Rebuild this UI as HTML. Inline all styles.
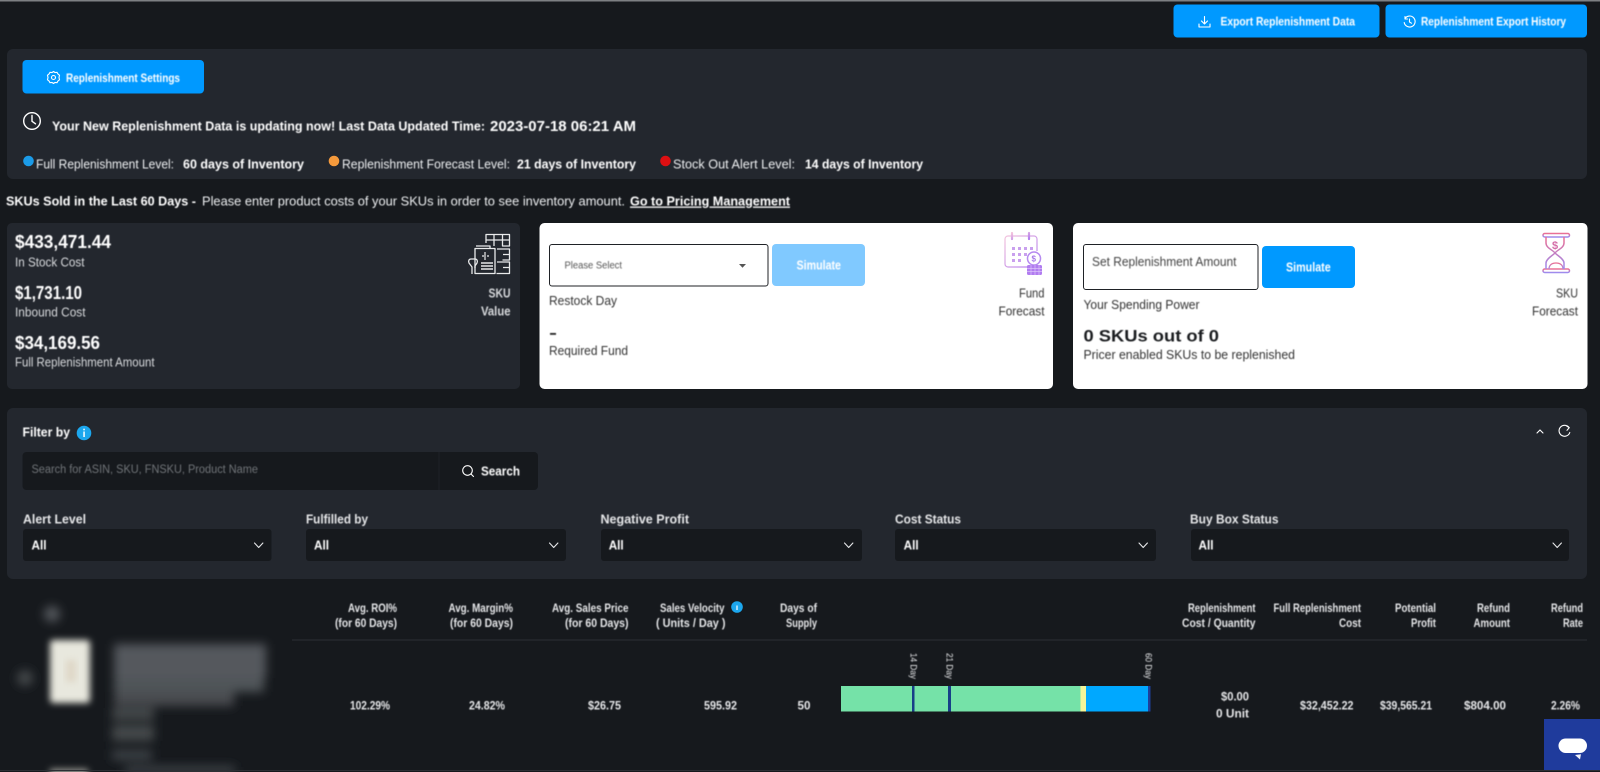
<!DOCTYPE html>
<html lang="en">
<head>
<meta charset="utf-8">
<title>Replenishment</title>
<style>
html,body{margin:0;padding:0;background:#16191d;width:1600px;height:772px;overflow:hidden}
svg{display:block}
text{font-family:"Liberation Sans",sans-serif;fill:#fff}
.r{font-weight:400}
.b{font-weight:700}
.w{fill:#eef0f2}
.soft{filter:blur(.45px)}
</style>
</head>
<body>
<svg width="1600" height="772" viewBox="0 0 1600 772" xmlns="http://www.w3.org/2000/svg">
<defs>
<filter id="bl" x="-30%" y="-30%" width="160%" height="160%"><feGaussianBlur stdDeviation="5"/></filter>
<filter id="bl2" x="-30%" y="-30%" width="160%" height="160%"><feGaussianBlur stdDeviation="3.500"/></filter>
<linearGradient id="hg" x1="0" y1="0" x2="0" y2="1"><stop offset="0" stop-color="#ec6f92"/><stop offset="1" stop-color="#9c8cf0"/></linearGradient>
<linearGradient id="cg" x1="0" y1="0" x2="1" y2="1"><stop offset="0" stop-color="#f3c3dd"/><stop offset="1" stop-color="#b17cf0"/></linearGradient>
</defs>
<rect width="1600" height="772" fill="#16191d"/>
<rect width="1600" height="1.500" fill="#7d8083"/>

<!-- top buttons -->
<rect x="1173.500" y="4.500" width="206" height="33" rx="4" fill="#0099ff"/>
<rect x="1385.500" y="4.500" width="201.500" height="33" rx="4" fill="#0099ff"/>
<g fill="none" stroke="#fff" stroke-width="1.100" stroke-linecap="round" stroke-linejoin="round">
<path d="M1204.500 16.500v7M1201.500 21l3 3 3-3M1199 24v3h11v-3"/>
<path d="M1405 18.500a5.500 5.500 0 1 1-.800 4M1405 16.500v2.500h2.500M1409.500 19v3l2 1.200"/>
</g>
<g class="soft">
<text class="b" x="1220.500" y="25.500" font-size="12" textLength="134.500" lengthAdjust="spacingAndGlyphs">Export Replenishment Data</text>
<text class="b" x="1421" y="25.500" font-size="12" textLength="145" lengthAdjust="spacingAndGlyphs">Replenishment Export History</text>
</g>

<!-- info panel -->
<rect x="7" y="49" width="1580" height="130" rx="6" fill="#23272e"/>
<rect x="22.500" y="60" width="181.500" height="33.500" rx="4" fill="#0099ff"/>
<g fill="none" stroke="#fff" stroke-width="1.100">
<circle cx="53.500" cy="77.500" r="2"/>
<path d="M53.500 71.500l1.500 1 2-.2 1 1.700 1.500 1.200-.5 2.300.5 2.300-1.500 1.200-1 1.700-2-.2-1.500 1-1.500-1-2 .2-1-1.700-1.500-1.200.5-2.300-.5-2.300 1.500-1.200 1-1.700 2 .2z"/>
<circle cx="32" cy="121" r="8.300" stroke-width="1.400"/>
<path d="M32 115.500v5.800l3.500 2.500" stroke-width="1.400" stroke-linecap="round"/>
</g>
<g class="soft">
<text class="b" x="66" y="82" font-size="12" textLength="114" lengthAdjust="spacingAndGlyphs">Replenishment Settings</text>
<text class="b" x="52" y="130.500" font-size="13" textLength="433" lengthAdjust="spacingAndGlyphs">Your New Replenishment Data is updating now! Last Data Updated Time:</text>
<text class="b" x="490" y="131" font-size="15" textLength="146" lengthAdjust="spacingAndGlyphs">2023-07-18 06:21 AM</text>
<text class="r w" x="36" y="168.500" font-size="13" textLength="138" lengthAdjust="spacingAndGlyphs">Full Replenishment Level:</text>
<text class="b" x="183" y="168.500" font-size="13" textLength="121" lengthAdjust="spacingAndGlyphs">60 days of Inventory</text>
<text class="r w" x="342" y="168.500" font-size="13" textLength="168" lengthAdjust="spacingAndGlyphs">Replenishment Forecast Level:</text>
<text class="b" x="517" y="168.500" font-size="13" textLength="119" lengthAdjust="spacingAndGlyphs">21 days of Inventory</text>
<text class="r w" x="673" y="168.500" font-size="13" textLength="122" lengthAdjust="spacingAndGlyphs">Stock Out Alert Level:</text>
<text class="b" x="805" y="168.500" font-size="13" textLength="118" lengthAdjust="spacingAndGlyphs">14 days of Inventory</text>
</g>
<circle cx="28.500" cy="161" r="5.300" fill="#1b9be8"/>
<circle cx="334" cy="161" r="5.300" fill="#f59a3c"/>
<circle cx="665.500" cy="161" r="5.300" fill="#dd0f12"/>

<!-- heading -->
<g class="soft">
<text class="b" x="6" y="205.500" font-size="13" textLength="190" lengthAdjust="spacingAndGlyphs">SKUs Sold in the Last 60 Days -</text>
<text class="r w" x="202" y="205.500" font-size="13" textLength="423" lengthAdjust="spacingAndGlyphs">Please enter product costs of your SKUs in order to see inventory amount.</text>
<text class="b" x="630" y="205.500" font-size="13" textLength="160" lengthAdjust="spacingAndGlyphs" text-decoration="underline">Go to Pricing Management</text>
</g>

<!-- card 1 -->
<rect x="7" y="223" width="513" height="166" rx="5" fill="#23272e"/>
<g class="soft">
<text class="b" x="15" y="248" font-size="18" textLength="96" lengthAdjust="spacingAndGlyphs">$433,471.44</text>
<text class="r" x="15" y="266.500" font-size="12.500" style="fill:#d8dadd" textLength="69.500" lengthAdjust="spacingAndGlyphs">In Stock Cost</text>
<text class="b" x="15" y="299" font-size="18" textLength="67" lengthAdjust="spacingAndGlyphs">$1,731.10</text>
<text class="r" x="15" y="316.500" font-size="12.500" style="fill:#d8dadd" textLength="70.500" lengthAdjust="spacingAndGlyphs">Inbound Cost</text>
<text class="b" x="15" y="349" font-size="18" textLength="85" lengthAdjust="spacingAndGlyphs">$34,169.56</text>
<text class="r" x="15" y="366.500" font-size="12.500" style="fill:#d8dadd" textLength="139.500" lengthAdjust="spacingAndGlyphs">Full Replenishment Amount</text>
<text class="b" x="488.500" y="297.500" font-size="12.500" style="fill:#d8dadd" textLength="22" lengthAdjust="spacingAndGlyphs">SKU</text>
<text class="b" x="481" y="315.500" font-size="12.500" style="fill:#d8dadd" textLength="29.500" lengthAdjust="spacingAndGlyphs">Value</text>
</g>
<g fill="none" stroke="#e8e9ea" stroke-width="1.300" stroke-linejoin="round">
<path d="M486 243v-8.500h23.500v11.500h-7v-11.500M494 234.500v11.500M486 240h23.500"/>
<path d="M497 249h12.500v11h-7M503 254.500h6.500M497 262h12.500v11.500h-13M503 267.500h6.500"/>
<path d="M476 246h14v2"/>
<rect x="475" y="248.500" width="20" height="25"/>
<path d="M482 256h2M485 252v8M487 256h2" stroke-width="1.200"/>
<path d="M481 263h12M481 266h12M481 269h12" stroke-width="1.400"/>
<path d="M472 274v-7l-3-4c-1-2 0-4 2-4h4c2 0 3 2 2 4l-2 3v2"/>
</g>

<!-- card 2 -->
<rect x="539.500" y="223" width="513.500" height="166" rx="5" fill="#fff"/>
<rect x="549.500" y="244.500" width="218.500" height="41.500" rx="2.500" fill="#fff" stroke="#1f2226" stroke-width="1"/>
<rect x="772" y="244" width="93" height="42" rx="4" fill="#80c9ff"/>
<path d="M739 264h7l-3.500 3.800z" fill="#555"/>
<g class="soft">
<text class="r" x="564.500" y="268.500" font-size="10" style="fill:#555" textLength="57.500" lengthAdjust="spacingAndGlyphs">Please Select</text>
<text class="b" x="796.500" y="269.500" font-size="13" textLength="44.500" lengthAdjust="spacingAndGlyphs">Simulate</text>
<text class="r" x="549" y="305" font-size="12.500" style="fill:#333" textLength="68" lengthAdjust="spacingAndGlyphs">Restock Day</text>
<rect x="550" y="333" width="6" height="1.800" fill="#222"/>
<text class="r" x="549" y="355" font-size="12.500" style="fill:#333" textLength="79" lengthAdjust="spacingAndGlyphs">Required Fund</text>
<text class="r" x="1019" y="297.500" font-size="12.500" style="fill:#333" textLength="25.500" lengthAdjust="spacingAndGlyphs">Fund</text>
<text class="r" x="998.500" y="315.500" font-size="12.500" style="fill:#333" textLength="46" lengthAdjust="spacingAndGlyphs">Forecast</text>
</g>
<g fill="none" stroke="url(#cg)" stroke-width="1.200">
<path d="M1028 267h-20a3 3 0 0 1-3-3v-25a3 3 0 0 1 3-3h26a3 3 0 0 1 3 3v12"/>
<path d="M1005 243h33"/>
<path d="M1012 233v6M1029 233v6" stroke-width="2.200" stroke-linecap="round"/>
</g>
<g fill="#c9a0ee">
<rect x="1012" y="247" width="3" height="3"/><rect x="1018" y="247" width="3" height="3"/><rect x="1024" y="247" width="3" height="3"/><rect x="1030" y="247" width="3" height="3"/>
<rect x="1012" y="253" width="3" height="3"/><rect x="1018" y="253" width="3" height="3"/><rect x="1024" y="253" width="3" height="3"/>
<rect x="1012" y="259" width="3" height="3"/><rect x="1018" y="259" width="3" height="3"/>
</g>
<circle cx="1034" cy="258.500" r="6.500" fill="#fff" stroke="#b68af0" stroke-width="1.500"/>
<rect x="1027" y="265" width="15" height="10" rx="1.500" fill="#b17cf0"/>
<path d="M1027 268.300h15M1027 271.600h15M1031 265v10M1035 265v10M1039 265v10" stroke="#e2cdfa" stroke-width=".6"/>
<text class="b" x="1031.500" y="261.500" font-size="8" style="fill:#a678e8">$</text>

<!-- card 3 -->
<rect x="1073" y="223" width="514.500" height="166" rx="5" fill="#fff"/>
<rect x="1083.500" y="244.500" width="174.500" height="45" rx="2.500" fill="#fff" stroke="#1f2226" stroke-width="1"/>
<rect x="1262" y="246" width="93" height="42" rx="4" fill="#0099ff"/>
<g class="soft">
<text class="r" x="1092" y="266" font-size="12.500" style="fill:#444" textLength="144.500" lengthAdjust="spacingAndGlyphs">Set Replenishment Amount</text>
<text class="b" x="1286" y="271.500" font-size="13" textLength="44.700" lengthAdjust="spacingAndGlyphs">Simulate</text>
<text class="r" x="1083.500" y="309" font-size="12.500" style="fill:#333" textLength="116" lengthAdjust="spacingAndGlyphs">Your Spending Power</text>
<text class="b" x="1083.500" y="341.500" font-size="17" style="fill:#1a1c1f" textLength="135.500" lengthAdjust="spacingAndGlyphs">0 SKUs out of 0</text>
<text class="r" x="1083.500" y="359" font-size="12.500" style="fill:#333" textLength="211.500" lengthAdjust="spacingAndGlyphs">Pricer enabled SKUs to be replenished</text>
<text class="r" x="1556" y="297.500" font-size="12.500" style="fill:#333" textLength="22" lengthAdjust="spacingAndGlyphs">SKU</text>
<text class="r" x="1532" y="315.500" font-size="12.500" style="fill:#333" textLength="46" lengthAdjust="spacingAndGlyphs">Forecast</text>
</g>
<g fill="none" stroke="url(#hg)" stroke-width="1.500" stroke-linejoin="round">
<rect x="1543" y="233.500" width="26.500" height="3.500" rx="1.700"/>
<rect x="1543" y="269" width="26.500" height="3.500" rx="1.700"/>
<path d="M1546 237v6c0 5 7 7 9 10 2-3 9-5 9-10v-6M1546 269v-6c0-4 6-7 9-10 3 3 9 6 9 10v6"/>
<path d="M1549 269c0-4 3-6 7-6s7 2 7 6" stroke-width="1.300"/>
</g>
<text class="b" x="1552" y="249" font-size="11" style="fill:#d46ea8">$</text>

<!-- filter panel -->
<rect x="7" y="408" width="1580" height="171" rx="6" fill="#23272e"/>
<g class="soft">
<text class="b" x="22.500" y="436.500" font-size="13" textLength="47.500" lengthAdjust="spacingAndGlyphs">Filter by</text>
</g>
<circle cx="84" cy="433" r="7.300" fill="#1ca7ee"/>
<rect x="83.300" y="431.500" width="1.500" height="5.500" fill="#fff"/>
<rect x="83.300" y="428.700" width="1.500" height="1.600" fill="#fff"/>
<rect x="22.500" y="452" width="515.500" height="38" rx="4" fill="#16191d"/>
<rect x="438.500" y="452" width="1" height="38" fill="#1d2126"/>
<g class="soft">
<text class="r" x="31.500" y="473" font-size="11.500" style="fill:#717579" textLength="226.500" lengthAdjust="spacingAndGlyphs">Search for ASIN, SKU, FNSKU, Product Name</text>
<text class="b" x="481" y="475.500" font-size="13" textLength="39" lengthAdjust="spacingAndGlyphs">Search</text>
<text class="b" x="23" y="523.500" font-size="13" style="fill:#e6e7e9" textLength="63" lengthAdjust="spacingAndGlyphs">Alert Level</text>
<text class="b" x="306" y="523.500" font-size="13" style="fill:#e6e7e9" textLength="62" lengthAdjust="spacingAndGlyphs">Fulfilled by</text>
<text class="b" x="600.500" y="523.500" font-size="13" style="fill:#e6e7e9" textLength="88.500" lengthAdjust="spacingAndGlyphs">Negative Profit</text>
<text class="b" x="895" y="523.500" font-size="13" style="fill:#e6e7e9" textLength="66" lengthAdjust="spacingAndGlyphs">Cost Status</text>
<text class="b" x="1190" y="523.500" font-size="13" style="fill:#e6e7e9" textLength="88.500" lengthAdjust="spacingAndGlyphs">Buy Box Status</text>
</g>
<g fill="none" stroke="#fff" stroke-width="1.100" stroke-linecap="round">
<circle cx="467.500" cy="470.500" r="4.800"/><path d="M471 474l2.500 2.500"/>
<path d="M1537 433l3-3 3 3M1569 427.500a5.500 5.500 0 1 0 .8 5M1566 425.500l3.200 2.200-2.200 2.600"/>
</g>
<rect x="23" y="529" width="248.500" height="32" rx="3" fill="#16191d"/>
<rect x="306" y="529" width="260" height="32" rx="3" fill="#16191d"/>
<rect x="601" y="529" width="261" height="32" rx="3" fill="#16191d"/>
<rect x="895" y="529" width="261" height="32" rx="3" fill="#16191d"/>
<rect x="1191" y="529" width="378" height="32" rx="3" fill="#16191d"/>
<g class="soft">
<text class="b" x="31.500" y="549.500" font-size="13" textLength="15" lengthAdjust="spacingAndGlyphs">All</text>
<text class="b" x="314" y="549.500" font-size="13" textLength="15" lengthAdjust="spacingAndGlyphs">All</text>
<text class="b" x="608.700" y="549.500" font-size="13" textLength="15" lengthAdjust="spacingAndGlyphs">All</text>
<text class="b" x="903.600" y="549.500" font-size="13" textLength="15" lengthAdjust="spacingAndGlyphs">All</text>
<text class="b" x="1198.500" y="549.500" font-size="13" textLength="15" lengthAdjust="spacingAndGlyphs">All</text>
</g>
<g fill="none" stroke="#e6e7e9" stroke-width="1.100" stroke-linecap="round" stroke-linejoin="round">
<path d="M254.500 543l4.200 4.500 4.200-4.500M549.500 543l4.200 4.500 4.200-4.500M844.500 543l4.200 4.500 4.200-4.500M1139 543l4.200 4.500 4.200-4.500M1553 543l4.200 4.500 4.200-4.500"/>
</g>

<!-- blurred product -->
<g filter="url(#bl)">
<circle cx="52" cy="614" r="8" fill="#55595d"/>
<circle cx="25" cy="678" r="8" fill="#44484c"/>
<rect x="114" y="644" width="152" height="34" fill="#55595d"/>
<rect x="114" y="678" width="150" height="14" fill="#505458"/>
<rect x="114" y="692" width="120" height="14" fill="#484c50"/>
<rect x="112" y="708" width="42" height="12" fill="#44484c"/>
<rect x="112" y="725" width="42" height="16" fill="#44484c"/>
<rect x="112" y="750" width="40" height="10" fill="#3e4246"/>
<rect x="125" y="766" width="110" height="8" fill="#3e4246"/>
</g>
<g filter="url(#bl2)">
<rect x="50" y="640" width="40" height="63" rx="3" fill="#e8e8de"/>
<rect x="50" y="769" width="38" height="12" fill="#9a9a94"/>
</g>
<rect x="66" y="660" width="10" height="22" fill="#cdb89c" opacity=".35" filter="url(#bl2)"/>

<!-- table header -->
<g class="soft">
<text class="b" x="348" y="612" font-size="11.500" style="fill:#e6e7e9" textLength="49" lengthAdjust="spacingAndGlyphs">Avg. ROI%</text>
<text class="b" x="335" y="627" font-size="11.500" style="fill:#e6e7e9" textLength="62" lengthAdjust="spacingAndGlyphs">(for 60 Days)</text>
<text class="b" x="448.500" y="612" font-size="11.500" style="fill:#e6e7e9" textLength="64.500" lengthAdjust="spacingAndGlyphs">Avg. Margin%</text>
<text class="b" x="450" y="627" font-size="11.500" style="fill:#e6e7e9" textLength="63" lengthAdjust="spacingAndGlyphs">(for 60 Days)</text>
<text class="b" x="552" y="612" font-size="11.500" style="fill:#e6e7e9" textLength="76.500" lengthAdjust="spacingAndGlyphs">Avg. Sales Price</text>
<text class="b" x="565" y="627" font-size="11.500" style="fill:#e6e7e9" textLength="63.500" lengthAdjust="spacingAndGlyphs">(for 60 Days)</text>
<text class="b" x="660" y="612" font-size="11.500" style="fill:#e6e7e9" textLength="64.500" lengthAdjust="spacingAndGlyphs">Sales Velocity</text>
<text class="b" x="656" y="627" font-size="11.500" style="fill:#e6e7e9" textLength="69.500" lengthAdjust="spacingAndGlyphs">( Units / Day )</text>
<text class="b" x="780" y="612" font-size="11.500" style="fill:#e6e7e9" textLength="37" lengthAdjust="spacingAndGlyphs">Days of</text>
<text class="b" x="786" y="627" font-size="11.500" style="fill:#e6e7e9" textLength="31" lengthAdjust="spacingAndGlyphs">Supply</text>
<text class="b" x="1188" y="612" font-size="11.500" style="fill:#e6e7e9" textLength="67.500" lengthAdjust="spacingAndGlyphs">Replenishment</text>
<text class="b" x="1182" y="627" font-size="11.500" style="fill:#e6e7e9" textLength="73.500" lengthAdjust="spacingAndGlyphs">Cost / Quantity</text>
<text class="b" x="1273.500" y="612" font-size="11.500" style="fill:#e6e7e9" textLength="87.500" lengthAdjust="spacingAndGlyphs">Full Replenishment</text>
<text class="b" x="1339" y="627" font-size="11.500" style="fill:#e6e7e9" textLength="22" lengthAdjust="spacingAndGlyphs">Cost</text>
<text class="b" x="1395" y="612" font-size="11.500" style="fill:#e6e7e9" textLength="41" lengthAdjust="spacingAndGlyphs">Potential</text>
<text class="b" x="1411" y="627" font-size="11.500" style="fill:#e6e7e9" textLength="25" lengthAdjust="spacingAndGlyphs">Profit</text>
<text class="b" x="1477" y="612" font-size="11.500" style="fill:#e6e7e9" textLength="33" lengthAdjust="spacingAndGlyphs">Refund</text>
<text class="b" x="1473.500" y="627" font-size="11.500" style="fill:#e6e7e9" textLength="36.500" lengthAdjust="spacingAndGlyphs">Amount</text>
<text class="b" x="1551" y="612" font-size="11.500" style="fill:#e6e7e9" textLength="32" lengthAdjust="spacingAndGlyphs">Refund</text>
<text class="b" x="1563" y="627" font-size="11.500" style="fill:#e6e7e9" textLength="20" lengthAdjust="spacingAndGlyphs">Rate</text>
</g>
<circle cx="737" cy="607" r="5.800" fill="#1ca7ee"/>
<rect x="736.400" y="605.500" width="1.200" height="4.500" fill="#fff"/>
<rect x="292" y="639.500" width="1295" height="1" fill="#2c3035"/>
<rect x="0" y="770" width="1600" height="1" fill="#2c3035"/>

<!-- row values -->
<g class="soft">
<text class="b" x="350" y="709.500" font-size="12" style="fill:#e6e7e9" textLength="40" lengthAdjust="spacingAndGlyphs">102.29%</text>
<text class="b" x="469" y="709.500" font-size="12" style="fill:#e6e7e9" textLength="36" lengthAdjust="spacingAndGlyphs">24.82%</text>
<text class="b" x="588" y="709.500" font-size="12" style="fill:#e6e7e9" textLength="33" lengthAdjust="spacingAndGlyphs">$26.75</text>
<text class="b" x="704" y="709.500" font-size="12" style="fill:#e6e7e9" textLength="33" lengthAdjust="spacingAndGlyphs">595.92</text>
<text class="b" x="797.500" y="709.500" font-size="12" style="fill:#e6e7e9" textLength="13" lengthAdjust="spacingAndGlyphs">50</text>
<text class="b" x="1221" y="700.500" font-size="12" style="fill:#e6e7e9" textLength="28" lengthAdjust="spacingAndGlyphs">$0.00</text>
<text class="b" x="1216" y="717.500" font-size="12" style="fill:#e6e7e9" textLength="33" lengthAdjust="spacingAndGlyphs">0 Unit</text>
<text class="b" x="1300" y="709.500" font-size="12" style="fill:#e6e7e9" textLength="53.500" lengthAdjust="spacingAndGlyphs">$32,452.22</text>
<text class="b" x="1380" y="709.500" font-size="12" style="fill:#e6e7e9" textLength="52" lengthAdjust="spacingAndGlyphs">$39,565.21</text>
<text class="b" x="1464" y="709.500" font-size="12" style="fill:#e6e7e9" textLength="42" lengthAdjust="spacingAndGlyphs">$804.00</text>
<text class="b" x="1551" y="709.500" font-size="12" style="fill:#e6e7e9" textLength="29" lengthAdjust="spacingAndGlyphs">2.26%</text>
</g>

<!-- stock bar -->
<rect x="841" y="686" width="240" height="25.500" fill="#75e2a8"/>
<rect x="1080.500" y="686" width="5.500" height="25.500" fill="#f3f59a"/>
<rect x="1086" y="686" width="62" height="25.500" fill="#00a8ff"/>
<rect x="1148" y="686" width="2.500" height="25.500" fill="#1f3f98"/>
<rect x="912" y="686" width="2.500" height="25.500" fill="#173f88"/>
<rect x="948" y="686" width="3" height="25.500" fill="#173f88"/>
<g class="soft">
<text class="r" transform="translate(910.500 653) rotate(90)" font-size="9" style="fill:#e6e7e9" textLength="26" lengthAdjust="spacingAndGlyphs">14 Day</text>
<text class="r" transform="translate(946.500 653) rotate(90)" font-size="9" style="fill:#e6e7e9" textLength="26" lengthAdjust="spacingAndGlyphs">21 Day</text>
<text class="r" transform="translate(1145.500 653) rotate(90)" font-size="9" style="fill:#e6e7e9" textLength="26" lengthAdjust="spacingAndGlyphs">60 Day</text>
</g>

<!-- chat widget -->
<rect x="1544" y="719" width="56" height="51" fill="#1f3b9c"/>
<rect x="1558.500" y="738.500" width="28.500" height="14.500" rx="7.200" fill="#fff"/>
<path d="M1575 755l6-.8-1 5.300z" fill="#f0f2fa"/>
</svg>
</body>
</html>
